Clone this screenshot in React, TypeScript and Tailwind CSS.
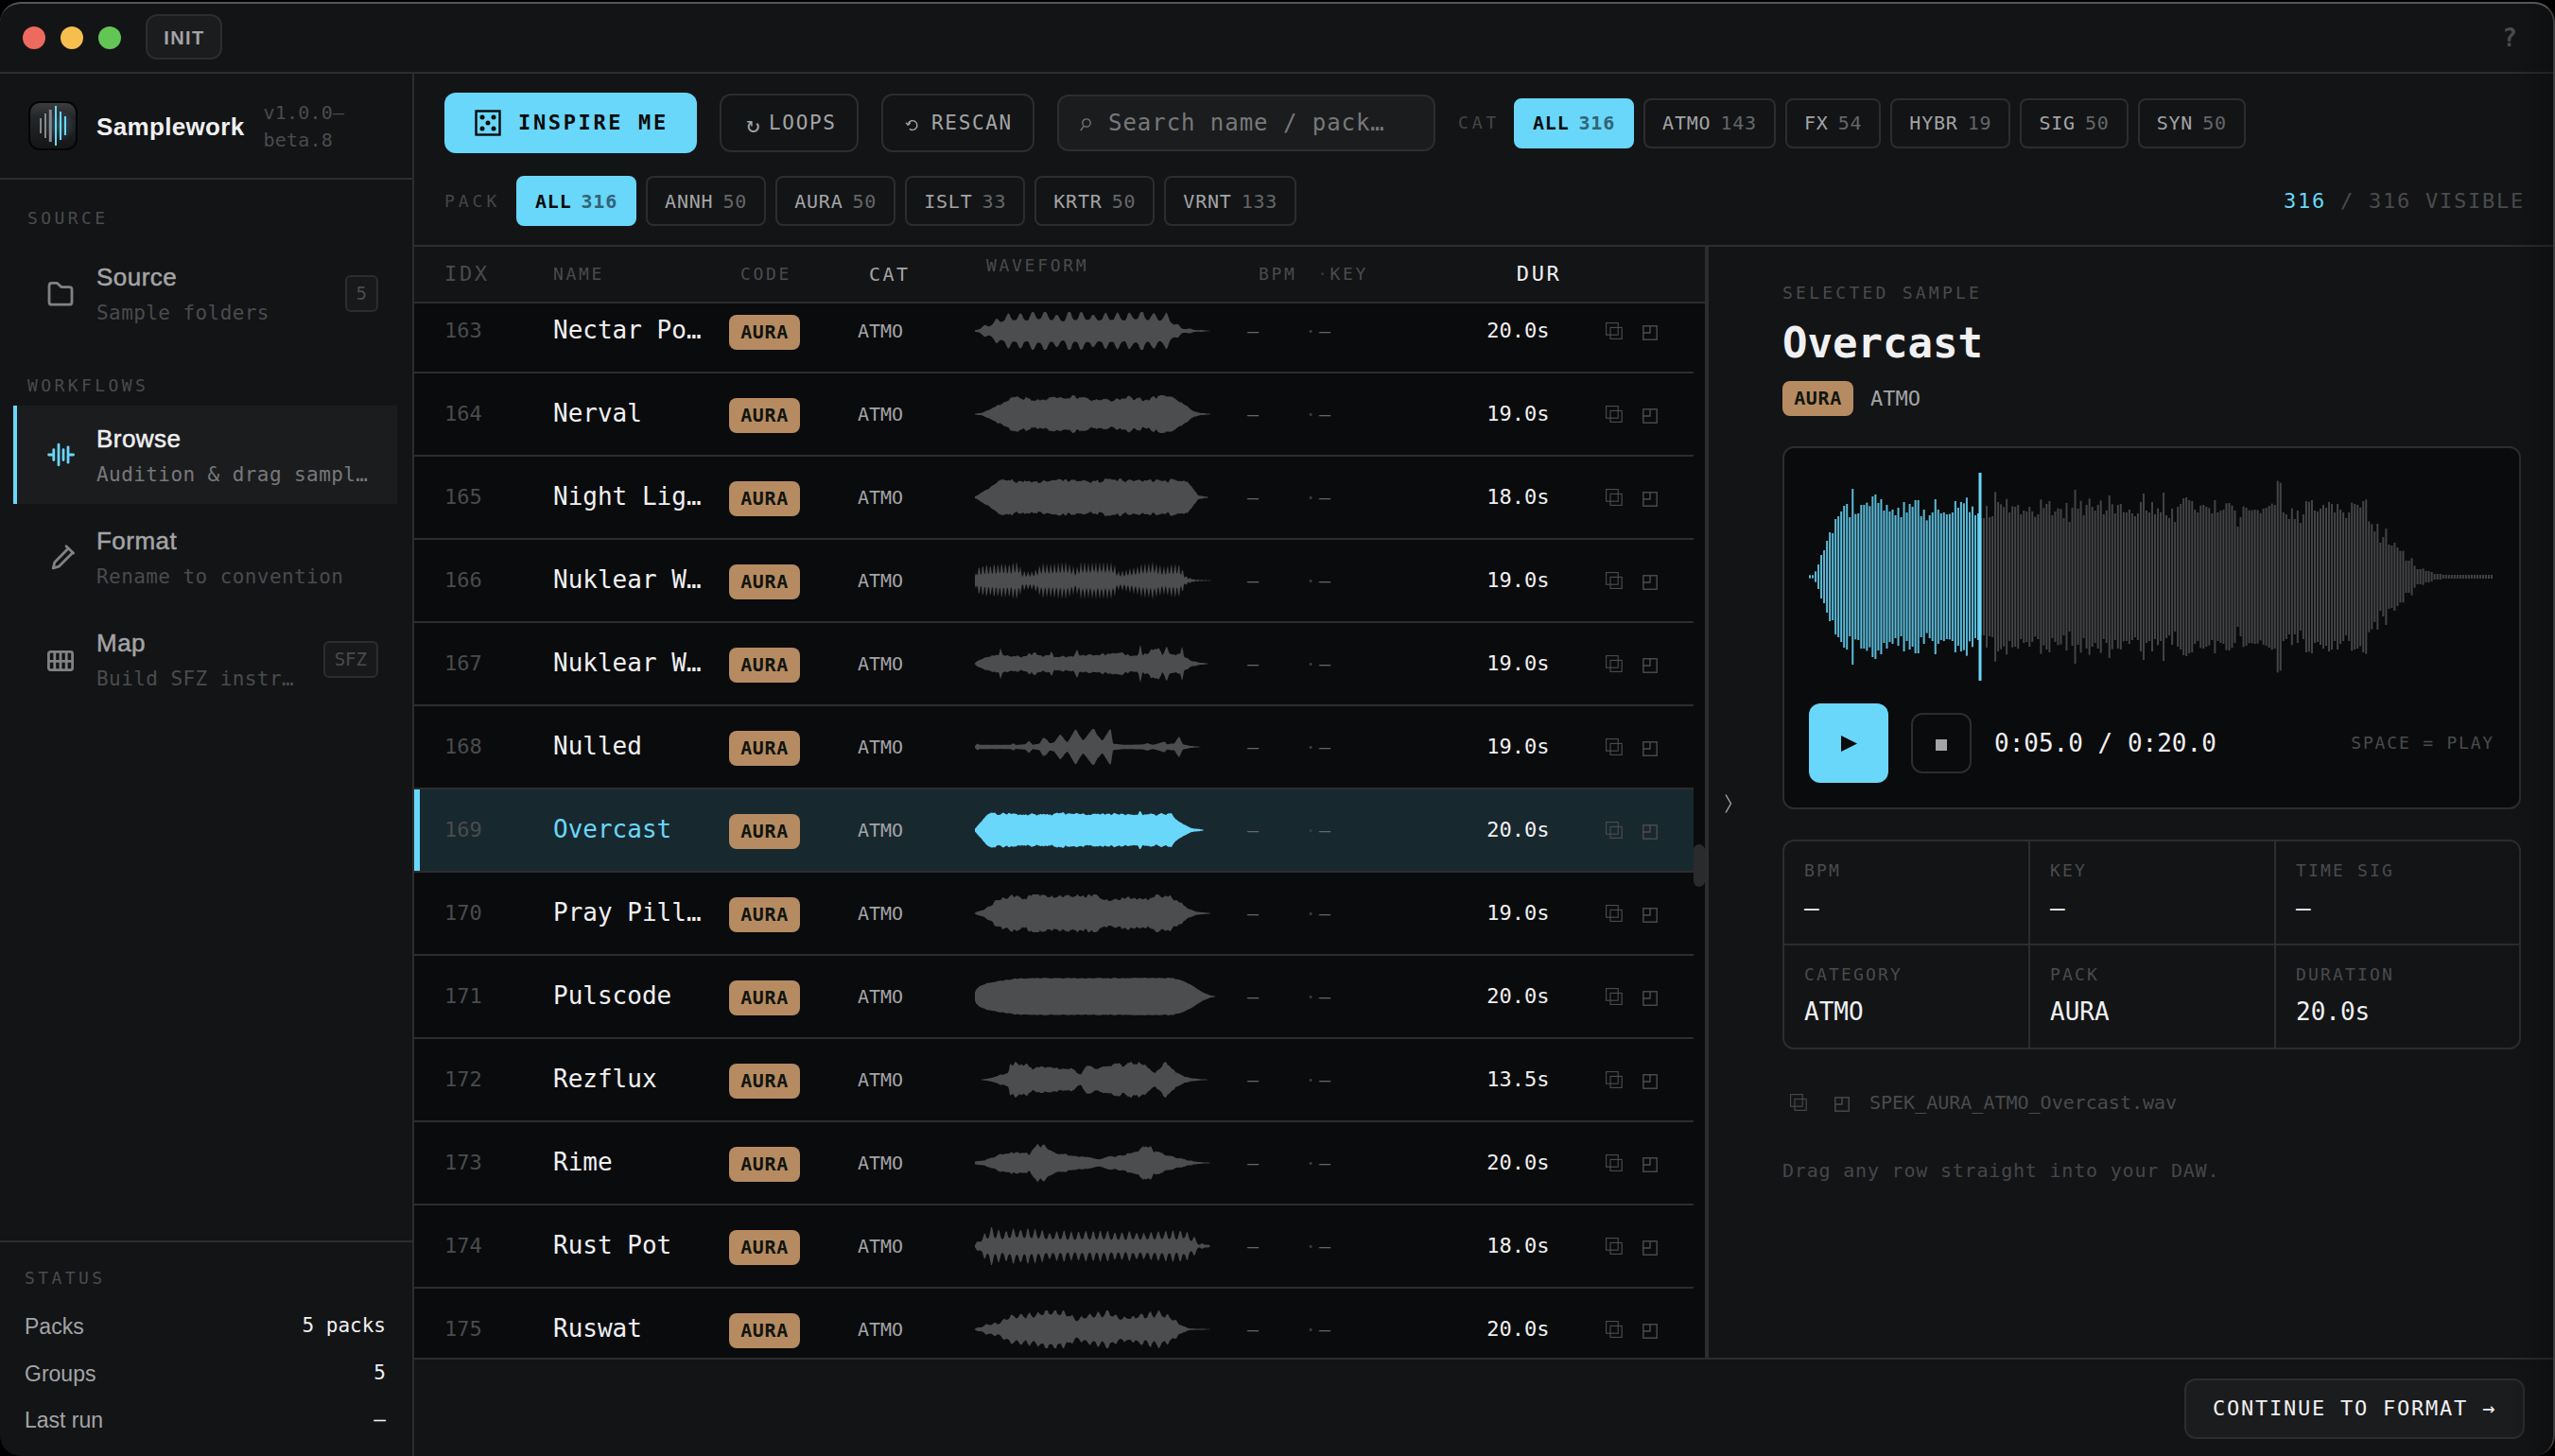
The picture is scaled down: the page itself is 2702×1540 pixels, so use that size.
import { ReactNode } from "react";
import clsx from "clsx";

type Point = [number, number];

type Wave = {
  env: Point[];
  rough?: number;
  period?: number;
  depth?: number;
};

type Sample = {
  idx: number;
  name: string;
  dur: string;
  wave: Wave;
};

const samples: Sample[] = [
  {
    idx: 163,
    name: "Nectar Po…",
    dur: "20.0s",
    wave: {
      env: [[0, 0.05], [0.03, 0.25], [0.07, 0.55], [0.11, 0.9], [0.14, 1], [0.19, 1.05], [0.29, 1.2], [0.35, 0.95], [0.4, 1.15], [0.5, 1], [0.7, 1.12], [0.8, 1.05], [0.83, 0.55], [0.86, 0.22], [0.9, 0.12], [0.93, 0.06], [0.98, 0.02]],
      rough: 0.18,
      period: 0.0505,
      depth: 0.42,
    },
  },
  {
    idx: 164,
    name: "Nerval",
    dur: "19.0s",
    wave: {
      env: [[0, 0.02], [0.03, 0.08], [0.08, 0.42], [0.13, 0.75], [0.15, 1.05], [0.25, 0.88], [0.32, 0.95], [0.4, 1.1], [0.48, 0.9], [0.52, 0.88], [0.58, 0.85], [0.64, 1.08], [0.7, 0.9], [0.77, 1.12], [0.83, 0.98], [0.87, 0.6], [0.91, 0.2], [0.94, 0.06], [0.98, 0.02]],
      rough: 0.3,
    },
  },
  {
    idx: 165,
    name: "Night Lig…",
    dur: "18.0s",
    wave: {
      env: [[0, 0.05], [0.04, 0.38], [0.08, 0.75], [0.1, 1.05], [0.25, 0.95], [0.4, 1.05], [0.48, 0.95], [0.56, 1.1], [0.65, 1], [0.74, 0.98], [0.78, 1.05], [0.87, 1.05], [0.89, 0.85], [0.915, 0.4], [0.93, 0.1], [0.97, 0.03]],
      rough: 0.28,
    },
  },
  {
    idx: 166,
    name: "Nuklear W…",
    dur: "19.0s",
    wave: {
      env: [[0, 0.3], [0.01, 0.9], [0.1, 1.05], [0.15, 1.1], [0.18, 1.2], [0.195, 0.6], [0.24, 0.6], [0.28, 1], [0.38, 1.2], [0.42, 0.75], [0.44, 1.1], [0.5, 1.15], [0.57, 1.2], [0.6, 0.55], [0.66, 0.8], [0.74, 1.15], [0.78, 0.8], [0.85, 1.1], [0.88, 0.25], [0.92, 0.06], [0.98, 0.02]],
      rough: 0.2,
      period: 0.0157,
      depth: 0.62,
    },
  },
  {
    idx: 167,
    name: "Nuklear W…",
    dur: "19.0s",
    wave: {
      env: [[0, 0.05], [0.02, 0.25], [0.07, 0.5], [0.1, 0.5], [0.107, 0.9], [0.116, 0.48], [0.2, 0.48], [0.25, 0.72], [0.27, 0.48], [0.31, 0.5], [0.32, 0.7], [0.33, 0.45], [0.41, 0.5], [0.424, 0.95], [0.435, 0.5], [0.57, 0.65], [0.62, 0.7], [0.65, 0.45], [0.68, 0.5], [0.689, 1.25], [0.698, 0.55], [0.77, 1.1], [0.78, 0.6], [0.8, 1.2], [0.81, 0.6], [0.855, 0.6], [0.863, 1.25], [0.871, 0.45], [0.9, 0.18], [0.94, 0.06], [0.97, 0.02]],
      rough: 0.36,
    },
  },
  {
    idx: 168,
    name: "Nulled",
    dur: "19.0s",
    wave: {
      env: [[0, 0.05], [0.01, 0.2], [0.02, 0.12], [0.15, 0.12], [0.16, 0.22], [0.17, 0.12], [0.21, 0.15], [0.225, 0.35], [0.24, 0.12], [0.27, 0.2], [0.285, 0.55], [0.3, 0.42], [0.31, 0.2], [0.33, 0.25], [0.355, 0.72], [0.375, 0.38], [0.385, 0.25], [0.42, 1], [0.435, 0.65], [0.45, 0.35], [0.495, 1.08], [0.51, 0.65], [0.53, 0.35], [0.565, 1.05], [0.575, 0.18], [0.62, 0.12], [0.7, 0.14], [0.72, 0.2], [0.74, 0.12], [0.79, 0.3], [0.8, 0.15], [0.83, 0.2], [0.85, 0.6], [0.865, 0.15], [0.9, 0.05], [0.94, 0.01]],
      rough: 0.14,
    },
  },
  {
    idx: 169,
    name: "Overcast",
    dur: "20.0s",
    wave: {
      env: [[0, 0.08], [0.02, 0.42], [0.045, 0.8], [0.06, 0.98], [0.2, 0.9], [0.35, 0.96], [0.5, 0.94], [0.6, 0.94], [0.68, 0.88], [0.689, 1.2], [0.698, 0.9], [0.82, 0.95], [0.84, 0.6], [0.87, 0.36], [0.9, 0.12], [0.95, 0.03]],
      rough: 0.2,
    },
  },
  {
    idx: 170,
    name: "Pray Pill…",
    dur: "19.0s",
    wave: {
      env: [[0, 0.04], [0.04, 0.25], [0.1, 0.85], [0.17, 1.1], [0.2, 0.88], [0.25, 1.12], [0.4, 1.05], [0.52, 1.12], [0.56, 0.72], [0.64, 1.02], [0.7, 0.85], [0.75, 1.1], [0.82, 1.05], [0.86, 0.65], [0.89, 0.3], [0.92, 0.1], [0.98, 0.02]],
      rough: 0.32,
    },
  },
  {
    idx: 171,
    name: "Pulscode",
    dur: "20.0s",
    wave: {
      env: [[0, 0.2], [0.005, 0.4], [0.02, 0.56], [0.05, 0.72], [0.1, 0.85], [0.18, 0.99], [0.5, 1], [0.82, 1], [0.87, 0.85], [0.91, 0.55], [0.95, 0.22], [0.98, 0.06], [1, 0.02]],
      rough: 0.06,
    },
  },
  {
    idx: 172,
    name: "Rezflux",
    dur: "13.5s",
    wave: {
      env: [[0.025, 0.01], [0.06, 0.08], [0.1, 0.28], [0.14, 0.42], [0.146, 1], [0.16, 0.85], [0.17, 1.2], [0.185, 0.85], [0.22, 0.92], [0.24, 0.6], [0.28, 0.9], [0.32, 0.7], [0.4, 0.72], [0.44, 0.3], [0.47, 0.92], [0.5, 0.7], [0.56, 0.82], [0.68, 1.08], [0.72, 0.75], [0.75, 0.42], [0.79, 1.12], [0.82, 0.62], [0.86, 0.28], [0.9, 0.1], [0.94, 0.04], [0.97, 0.01]],
      rough: 0.3,
    },
  },
  {
    idx: 173,
    name: "Rime",
    dur: "20.0s",
    wave: {
      env: [[0, 0.08], [0.04, 0.16], [0.12, 0.6], [0.18, 0.68], [0.23, 0.6], [0.25, 1.1], [0.29, 1.2], [0.31, 0.85], [0.35, 0.6], [0.42, 0.45], [0.51, 0.24], [0.6, 0.48], [0.68, 0.7], [0.71, 1.2], [0.74, 0.88], [0.78, 0.62], [0.83, 0.36], [0.88, 0.18], [0.93, 0.06], [0.98, 0.02]],
      rough: 0.34,
    },
  },
  {
    idx: 174,
    name: "Rust Pot",
    dur: "18.0s",
    wave: {
      env: [[0, 0.1], [0.02, 0.5], [0.07, 1.2], [0.12, 0.95], [0.2, 1.1], [0.3, 0.9], [0.5, 0.9], [0.7, 0.88], [0.82, 0.9], [0.87, 1.02], [0.91, 0.6], [0.935, 0.15], [0.96, 0.18], [0.98, 0.03]],
      rough: 0.24,
      period: 0.0302,
      depth: 0.55,
    },
  },
  {
    idx: 175,
    name: "Ruswat",
    dur: "20.0s",
    wave: {
      env: [[0, 0.04], [0.05, 0.32], [0.1, 0.48], [0.15, 0.95], [0.25, 1.05], [0.33, 1.2], [0.39, 1.1], [0.42, 0.65], [0.48, 1.02], [0.56, 1.15], [0.61, 0.8], [0.7, 0.98], [0.78, 1.15], [0.83, 0.68], [0.87, 0.18], [0.9, 0.05], [0.98, 0.02]],
      rough: 0.26,
      period: 0.036,
      depth: 0.28,
    },
  },
];

// Top edge of every bar in the large waveform; the centre line is at 510.
const BAR_TOPS = [
  505, 505, 493, 471, 441, 426, 396, 369, 372, 327, 318, 303, 285, 279, 321, 231, 311, 309, 282, 282,
  275, 286, 255, 249, 276, 264, 300, 282, 303, 297, 315, 291, 321, 273, 306, 279, 288, 267, 267, 318,
  297, 331, 315, 306, 264, 297, 309, 306, 312, 311, 306, 270, 291, 273, 277, 259, 305, 287, 315, 309,
  324, 324, 285, 321, 318, 241, 273, 280, 289, 263, 306, 286, 288, 282, 312, 300, 303, 288, 303, 320,
  312, 265, 292, 279, 270, 315, 303, 293, 295, 324, 276, 336, 291, 234, 294, 269, 315, 282, 262, 288,
  300, 282, 268, 312, 300, 252, 280, 309, 282, 279, 305, 306, 297, 309, 318, 309, 273, 246, 300, 306,
  273, 312, 293, 306, 243, 315, 324, 294, 336, 288, 279, 261, 258, 267, 270, 297, 306, 284, 282, 288,
  292, 309, 267, 306, 300, 297, 277, 276, 284, 300, 351, 321, 287, 291, 299, 299, 297, 298, 308, 294,
  291, 285, 278, 282, 206, 212, 306, 312, 327, 293, 327, 300, 339, 312, 270, 272, 267, 300, 303, 294,
  282, 291, 273, 279, 306, 279, 297, 306, 324, 306, 275, 279, 282, 290, 270, 265, 334, 343, 366, 342,
  402, 384, 357, 408, 411, 402, 417, 428, 428, 459, 459, 451, 475, 486, 486, 484, 492, 492, 495, 501,
  501, 501, 504, 504, 504, 504, 504, 504, 504, 504, 504, 504, 504, 504, 504, 504, 504, 504, 504, 504,
];

const envelopeAt = (env: Point[], t: number) => {
  if (t < env[0][0] || t > env[env.length - 1][0]) return 0;
  for (let i = 1; i < env.length; i++) {
    const [x0, y0] = env[i - 1];
    const [x1, y1] = env[i];
    if (t <= x1) return y0 + ((y1 - y0) * (t - x0)) / (x1 - x0);
  }
  return 0;
};

const wavePath = ({ env, rough = 0.1, period, depth = 0 }: Wave, seed: number) => {
  let state = seed * 7919;
  const rand = () => {
    state = (state * 16807) % 2147483647;
    return state / 2147483647;
  };
  // coarse noise gives lumps a few pixels wide, fine noise roughens their edges
  const lumps = Array.from({ length: 90 }, rand);
  const top: string[] = [];
  const bottom: string[] = [];
  for (let x = 0; x <= 254; x += 1) {
    const t = x / 254;
    const cell = Math.floor(x / 3);
    const mix = (x % 3) / 3;
    const lump = lumps[cell] * (1 - mix) + lumps[cell + 1] * mix;
    let h = envelopeAt(env, t) * (1 - rough * (0.7 * lump + 0.3 * rand()));
    if (period) {
      const pulse = Math.pow((1 + Math.cos((2 * Math.PI * (t - 0.19)) / period)) / 2, 1.6);
      h *= 1 - depth + depth * pulse;
    }
    h = Math.min(h, 1);
    top.push(`${x} ${(20 - h * 20).toFixed(1)}`);
    bottom.unshift(`${x} ${(20 + h * 20).toFixed(1)}`);
  }
  return `M${top.join("L")}L${bottom.join("L")}Z`;
};

function MiniWave({ wave, seed, active }: { wave: Wave; seed: number; active: boolean }) {
  return (
    <svg width="256" height="40" viewBox="0 0 256 40" className={active ? "text-[#69d7f9]" : "text-[#4c4d4f]"}>
      <path d={wavePath(wave, seed)} fill="currentColor" />
    </svg>
  );
}

function CopyIcon() {
  return (
    <svg width="18" height="18" viewBox="0 0 18 18" fill="none" stroke="currentColor" strokeWidth="1.1">
      <rect x="0.6" y="0.6" width="12.6" height="12.6" />
      <rect x="5" y="5.4" width="12.2" height="12" />
    </svg>
  );
}

function RevealIcon() {
  return (
    <svg width="16" height="16" viewBox="0 0 16 16" fill="none" stroke="currentColor" strokeWidth="1.4">
      <rect x="0.8" y="0.8" width="14.4" height="14.4" />
      <path d="M8 1v7H1" />
    </svg>
  );
}

function Logo() {
  return (
    <svg width="52" height="52" viewBox="0 0 52 52">
      <defs>
        <linearGradient id="logoBg" x1="0" y1="0" x2="0" y2="1">
          <stop offset="0" stopColor="#3c3d3f" />
          <stop offset="0.3" stopColor="#252628" />
          <stop offset="1" stopColor="#141517" />
        </linearGradient>
        <radialGradient id="logoGlow">
          <stop offset="0" stopColor="#69d7f9" stopOpacity="0.25" />
          <stop offset="1" stopColor="#69d7f9" stopOpacity="0" />
        </radialGradient>
      </defs>
      <rect x="0" y="0" width="52" height="52" rx="12" fill="#050506" />
      <rect x="2" y="2" width="48" height="48" rx="10" fill="url(#logoBg)" />
      <circle cx="33" cy="26" r="17" fill="url(#logoGlow)" />
      <g stroke="#85888c" strokeWidth="2">
        <path d="M13 18v16M18 13v26" />
        <path d="M23.3 9v34" strokeWidth="3" />
      </g>
      <path d="M29 5v42M34 11v30M39 16v20" stroke="#69d7f9" strokeWidth="2" />
    </svg>
  );
}

function NavIcon({ children }: { children: ReactNode }) {
  return (
    <svg width="32" height="32" viewBox="0 0 16 16" fill="none" stroke="currentColor" strokeWidth="1.4" strokeLinecap="round" strokeLinejoin="round" className="shrink-0">
      {children}
    </svg>
  );
}

type NavItemProps = {
  icon: ReactNode;
  title: string;
  sub: string;
  badge?: string;
  active?: boolean;
};

function NavItem({ icon, title, sub, badge, active }: NavItemProps) {
  return (
    <div
      className={clsx(
        "ml-[14px] mr-4 flex h-[104px] items-center border-l-4 pl-[30px] pr-5",
        active ? "border-[#69d7f9] bg-[#1b1c1e]" : "border-transparent"
      )}
    >
      <div className={active ? "text-[#69d7f9]" : "text-[#818284]"}>{icon}</div>
      <div className="ml-[22px] mt-[3px] flex-1 whitespace-nowrap">
        <div
          className={clsx(
            "font-['Liberation_Sans',sans-serif] text-[26px] font-medium leading-[38px] tracking-[0.018em] [-webkit-text-stroke:0.5px_currentColor]",
            active ? "text-[#f0f0f2]" : "text-[#a3a4a6]"
          )}
        >
          {title}
        </div>
        <div className={clsx("text-[21px] leading-[38px] tracking-[0.02em]", active ? "text-[#77787a]" : "text-[#4a4b4d]")}>
          {sub}
        </div>
      </div>
      {badge && (
        <div className="flex h-[39px] items-center rounded-md border-2 border-[#2c2d2f] bg-[#18191b] px-[10px] text-[19px] leading-none text-[#4a4b4d]">
          {badge}
        </div>
      )}
    </div>
  );
}

function Chip({ label, count, active }: { label: string; count: number; active?: boolean }) {
  return (
    <div
      className={clsx(
        "flex h-[53px] items-center gap-[10px] rounded-lg border-2 px-[18px] text-[20px] leading-none tracking-[0.04em]",
        active ? "border-[#69d7f9] bg-[#69d7f9] font-bold text-[#0a0b0d]" : "border-[#2c2d2f] text-[#a3a4a6]"
      )}
    >
      <span>{label}</span>
      <span className={active ? "text-[#316476]" : "text-[#656668]"}>{count}</span>
    </div>
  );
}

function PackBadge() {
  return (
    <span className="flex h-[37px] w-[75px] items-center justify-center rounded-lg bg-[#b78b62] pb-[2px] text-[20px] font-bold leading-none tracking-[0.03em] text-[#11150f]">
      AURA
    </span>
  );
}

function SampleRow({ sample, active }: { sample: Sample; active: boolean }) {
  return (
    <div
      className={clsx(
        "flex h-[88px] shrink-0 items-center whitespace-nowrap border-b-2 border-[#2c2d2f] leading-none",
        active && "bg-[#18282f]"
      )}
    >
      <div className={clsx("h-full w-[6px]", active && "bg-[#69d7f9]")} />
      <div className="ml-[26px] w-[115px] text-[22px] text-[#4a4b4d]">{sample.idx}</div>
      <div className={clsx("w-[186px] -translate-y-px text-[26px]", active ? "text-[#69d7f9]" : "text-[#f0f0f2]")}>
        {sample.name}
      </div>
      <div className="w-[136px] pt-[3px]">
        <PackBadge />
      </div>
      <div className="w-[124px] text-[20px] text-[#a3a4a6]">ATMO</div>
      <div className="w-[288px]">
        <MiniWave wave={sample.wave} seed={sample.idx} active={active} />
      </div>
      <div className="w-[61px] text-[20px] text-[#656668]">—</div>
      <div className="flex w-[100px] text-[20px] text-[#656668]">
        <span className="w-[15px] text-[#3a3b3d]">·</span>
        <span>—</span>
      </div>
      <div className="w-[158.5px] text-right text-[22px] text-[#f0f0f2]">{sample.dur}</div>
      <div className="ml-[59px] flex items-center gap-[21px] text-[#4c4d4f]">
        <CopyIcon />
        <span className="pt-[4px]">
          <RevealIcon />
        </span>
      </div>
    </div>
  );
}

function InfoCell({ label, value, className }: { label: string; value: string; className?: string }) {
  return (
    <div className={clsx("flex flex-col border-[#2c2d2f] pl-[21px] pt-5", className)}>
      <span className="text-[18px] leading-[22px] tracking-[0.12em] text-[#4a4b4d]">{label}</span>
      <span className="mt-[13px] text-[26px] leading-[30px] text-[#f0f0f2]">{value}</span>
    </div>
  );
}

function Sidebar() {
  return (
    <aside className="flex w-[438px] shrink-0 flex-col border-r-2 border-[#2c2d2f]">
      <div className="flex h-[112px] shrink-0 items-center border-b-2 border-[#2c2d2f] pl-[30px]">
        <Logo />
        <span className="ml-5 mt-[2px] font-['Liberation_Sans',sans-serif] text-[26px] font-bold tracking-[0.013em] text-[#f0f0f2]">
          Samplework
        </span>
        <span className="ml-[20px] mt-[2px] text-[20px] leading-[29px] tracking-[0.01em] text-[#4a4b4d]">
          v1.0.0–
          <br />
          beta.8
        </span>
      </div>

      <nav className="flex-1">
        <div className="ml-[29px] mt-[31px] text-[18px] leading-5 tracking-[0.19em] text-[#4a4b4d]">SOURCE</div>
        <div className="mt-[17px]">
          <NavItem
            title="Source"
            sub="Sample folders"
            badge="5"
            icon={
              <NavIcon>
                <path d="M2 4.2c0-.9.5-1.5 1.4-1.5h2.3c.5 0 .8.2 1.1.5l1.6 1.6h4.2c.9 0 1.4.6 1.4 1.4v6.5c0 .9-.5 1.4-1.4 1.4H3.4c-.9 0-1.4-.5-1.4-1.4z" />
              </NavIcon>
            }
          />
        </div>
        <div className="ml-[29px] mt-[36px] text-[18px] leading-5 tracking-[0.19em] text-[#4a4b4d]">WORKFLOWS</div>
        <div className="mt-[11px] flex flex-col gap-1">
          <NavItem
            active
            title="Browse"
            sub="Audition & drag sampl…"
            icon={
              <NavIcon>
                <path d="M1.8 8h2.6M4.4 5.3v5.5M7 2.6v10.8M9.5 5.3v5.5M12 3.9v8.2M12 8h2.8" />
              </NavIcon>
            }
          />
          <NavItem
            title="Format"
            sub="Rename to convention"
            icon={
              <NavIcon>
                <path d="M11 2.4l3.8 3.6M12 3.6L4.9 10.9l-.8 3.1 3-.9L14.2 6" />
              </NavIcon>
            }
          />
          <NavItem
            title="Map"
            sub="Build SFZ instr…"
            badge="SFZ"
            icon={
              <NavIcon>
                <rect x="1.7" y="4.2" width="12.6" height="9.6" rx="1" />
                <path d="M1.7 9.2h12.6M4.9 4.2v9.6M8 4.2v9.6M11.1 4.2v9.6" />
              </NavIcon>
            }
          />
        </div>
      </nav>

      <div className="h-[228px] shrink-0 border-t-2 border-[#2c2d2f] pl-[26px] pr-7 pt-[28px]">
        <div className="text-[18px] leading-5 tracking-[0.19em] text-[#4a4b4d]">STATUS</div>
        <div className="mt-[16px] text-[21px] text-[#f0f0f2]">
          {[
            { label: "Packs", value: "5 packs" },
            { label: "Groups", value: "5" },
            { label: "Last run", value: "—" },
          ].map((item) => (
            <div key={item.label} className="flex h-[49.5px] items-center justify-between">
              <span className="pt-[2px] font-['Liberation_Sans',sans-serif] text-[23px] leading-none text-[#a3a4a6]">{item.label}</span>
              <span className="leading-none">{item.value}</span>
            </div>
          ))}
        </div>
      </div>
    </aside>
  );
}

function Toolbar() {
  return (
    <div className="h-[183px] shrink-0 border-b-2 border-[#2c2d2f] pl-8 pr-[30px] pt-5 leading-none">
      <div className="flex h-16 items-center">
        <button className="flex h-16 w-[267px] items-center rounded-xl bg-[#69d7f9] pl-8 text-[22px] font-bold tracking-[0.12em] text-[#0a0b0d]">
          <svg width="28" height="28" viewBox="0 0 28 28" className="mr-[18px]">
            <rect x="1.5" y="1.5" width="25" height="25" fill="none" stroke="currentColor" strokeWidth="2.4" />
            <g fill="currentColor">
              <circle cx="8" cy="8" r="2.5" />
              <circle cx="20" cy="8" r="2.5" />
              <circle cx="14" cy="14" r="2.5" />
              <circle cx="8" cy="20" r="2.5" />
              <circle cx="20" cy="20" r="2.5" />
            </g>
          </svg>
          INSPIRE ME
        </button>
        <button className="ml-6 flex h-[62px] w-[147px] items-center rounded-xl border-2 border-[#2c2d2f] pl-[18px] text-[21px] tracking-[0.08em] text-[#a3a4a6]">
          <span className="w-[32px] pt-[3px] text-[24px]">↻</span>
          LOOPS
        </button>
        <button className="ml-6 flex h-[62px] w-[162px] items-center rounded-xl border-2 border-[#2c2d2f] pl-[23px] text-[21px] tracking-[0.08em] text-[#a3a4a6]">
          <svg width="15" height="18" viewBox="0 0 15 18" fill="none" stroke="currentColor" strokeWidth="1.4" className="mr-[13px] mt-1">
            <path d="M3.4 7.8a4.9 4.9 0 1 1 1.5 5.6M1 6.6l2.2 2.6 2.6-2.2" />
          </svg>
          RESCAN
        </button>
        <div className="ml-6 flex h-[60px] w-[400px] items-center rounded-xl border-2 border-[#2c2d2f] bg-[#1b1c1e] pl-[22px] text-[24px] tracking-[0.04em] text-[#77787a]">
          <svg width="12" height="14" viewBox="0 0 12 14" fill="none" stroke="currentColor" strokeWidth="1.3" className="mr-[18px] mt-1">
            <circle cx="7" cy="5" r="4.2" />
            <path d="M4.2 8.4L0.8 13" />
          </svg>
          Search name / pack…
        </div>
        <span className="ml-[24px] w-[59px] text-[18px] tracking-[0.22em] text-[#454648]">CAT</span>
        <div className="flex gap-[10px]">
          <Chip label="ALL" count={316} active />
          <Chip label="ATMO" count={143} />
          <Chip label="FX" count={54} />
          <Chip label="HYBR" count={19} />
          <Chip label="SIG" count={50} />
          <Chip label="SYN" count={50} />
        </div>
      </div>

      <div className="mt-6 flex h-[53px] items-center">
        <span className="w-[76px] text-[18px] tracking-[0.22em] text-[#454648]">PACK</span>
        <div className="flex gap-[10px]">
          <Chip label="ALL" count={316} active />
          <Chip label="ANNH" count={50} />
          <Chip label="AURA" count={50} />
          <Chip label="ISLT" count={33} />
          <Chip label="KRTR" count={50} />
          <Chip label="VRNT" count={133} />
        </div>
        <div className="ml-auto text-[22px] tracking-[0.08em] text-[#4a4b4d]">
          <span className="text-[#69d7f9]">316</span> / 316 VISIBLE
        </div>
      </div>
    </div>
  );
}

function SampleTable() {
  return (
    <div className="flex w-[1365px] shrink-0 flex-col bg-[#0a0b0d]">
      <div className="flex h-[60px] shrink-0 items-center border-b-2 border-[#2c2d2f] bg-[#131416] pl-[32px] text-[18px] leading-none tracking-[0.15em] text-[#4a4b4d]">
        <span className="w-[115px] text-[22px] tracking-[0.12em]">IDX</span>
        <span className="w-[198px]">NAME</span>
        <span className="w-[136px]">CODE</span>
        <span className="w-[124px] text-[20px] tracking-[0.12em] text-[#a3a4a6]">CAT</span>
        <span className="w-[288px] pb-[18px]">WAVEFORM</span>
        <span className="w-[62px]">BPM</span>
        <span className="w-[99px]">
          <span className="text-[#3a3b3d]">·</span>KEY
        </span>
        <span className="w-[159.5px] text-right text-[22px] tracking-[0.12em] text-[#f0f0f2]">DUR</span>
      </div>
      <div className="flex min-h-0 flex-1">
        {/* list is scrolled a few pixels past the top of the first row */}
        <div className="flex w-[1353px] flex-col overflow-hidden">
          <div className="-mt-[14px] flex flex-col">
            {samples.map((sample) => (
              <SampleRow key={sample.idx} sample={sample} active={sample.idx === 169} />
            ))}
          </div>
        </div>
        <div className="w-3 pt-[572px]">
          <div className="h-[45px] rounded-full bg-[#2a2b2c]" />
        </div>
      </div>
    </div>
  );
}

function Player() {
  return (
    <div className="mt-8 h-[384px] rounded-xl border-2 border-[#2c2d2f] bg-[#0a0b0d] px-[26px] pt-[26px]">
      <svg width="724" height="220" viewBox="0 0 724 220">
        {BAR_TOPS.map((top, i) => {
          const half = (510 - top) / 3;
          return (
            <rect
              key={i}
              x={i * 3.0167}
              y={110 - half}
              width="2"
              height={half * 2}
              fill={i < 60 ? "#5bbad8" : "#434446"}
            />
          );
        })}
        <rect x="179.5" y="0" width="3" height="220" fill="#69d7f9" />
      </svg>
      <div className="mt-6 flex items-center leading-none">
        <button className="flex size-[84px] items-center justify-center rounded-xl bg-[#69d7f9]">
          <svg width="17" height="17" viewBox="0 0 17 17" fill="#0a0b0d">
            <path d="M0 0l17 8.5L0 17z" />
          </svg>
        </button>
        <button className="ml-6 flex size-16 items-center justify-center rounded-xl border-2 border-[#2c2d2f]">
          <span className="mt-1 size-3 bg-[#a3a4a6]" />
        </button>
        <span className="ml-6 text-[26px] text-[#f0f0f2]">0:05.0 / 0:20.0</span>
        <span className="ml-auto text-[18px] tracking-[0.1em] text-[#4a4b4d]">SPACE = PLAY</span>
      </div>
    </div>
  );
}

function Inspector() {
  return (
    <div className="flex min-w-0 flex-1 border-l-4 border-[#2c2d2f]">
      <div className="flex w-[78px] shrink-0 items-center justify-center pr-[36px] pt-[3px]">
        <svg width="8" height="20" viewBox="0 0 8 20" fill="none" stroke="#a3a4a6" strokeWidth="1.4">
          <path d="M1 0.5l5.5 9.5L1 19.5" />
        </svg>
      </div>
      <div className="w-[781px] shrink-0 leading-none">
        <div className="mt-[38px] text-[18px] leading-[22px] tracking-[0.18em] text-[#4a4b4d]">SELECTED SAMPLE</div>
        <div className="mt-[17px] text-[44px] font-bold leading-[50px] text-[#f0f0f2]">Overcast</div>
        <div className="mt-[15px] flex items-center">
          <PackBadge />
          <span className="ml-[18px] text-[22px] text-[#a3a4a6]">ATMO</span>
        </div>

        <Player />

        <div className="mt-8 grid h-[222px] grid-cols-[260px_260px_1fr] grid-rows-[110px_1fr] rounded-xl border-2 border-[#2c2d2f]">
          <InfoCell label="BPM" value="—" className="border-b-2 border-r-2" />
          <InfoCell label="KEY" value="—" className="border-b-2 border-r-2" />
          <InfoCell label="TIME SIG" value="—" className="border-b-2" />
          <InfoCell label="CATEGORY" value="ATMO" className="border-r-2" />
          <InfoCell label="PACK" value="AURA" className="border-r-2" />
          <InfoCell label="DURATION" value="20.0s" />
        </div>

        <div className="mt-[46px] flex h-5 items-center pl-2 text-[20px] text-[#4a4b4d]">
          <CopyIcon />
          <span className="ml-[29px] pt-[4px]">
            <RevealIcon />
          </span>
          <span className="ml-[21px]">SPEK_AURA_ATMO_Overcast.wav</span>
        </div>
        <div className="mt-[52px] text-[20px] tracking-[0.04em] text-[#464749]">Drag any row straight into your DAW.</div>
      </div>
    </div>
  );
}

export default function App() {
  return (
    <div className="h-[1540px] w-[2702px] overflow-hidden bg-black pt-[2px] font-['DejaVu_Sans_Mono',monospace]">
      <div className="relative flex h-[1538px] flex-col overflow-hidden rounded-[22px] border-r-2 border-t-2 border-r-[#3c3d3e] border-t-[#555658] bg-[#131416]">
        <header className="flex h-[74px] shrink-0 items-center border-b-2 border-[#2c2d2f] pl-6 pr-[38px] leading-none">
          <div className="flex gap-4">
            <span className="size-6 rounded-full bg-[#ed6a5f]" />
            <span className="size-6 rounded-full bg-[#f5be4f]" />
            <span className="size-6 rounded-full bg-[#62c554]" />
          </div>
          <div className="-mt-[2px] ml-[26px] flex h-12 w-[81px] items-center justify-center rounded-xl border-2 border-[#2c2d2f] bg-[#1b1c1e] pl-px pt-px font-['Liberation_Sans',sans-serif] text-[20px] font-bold tracking-[0.07em] text-[#a3a4a6]">
            INIT
          </div>
          <span className="ml-auto text-[26px] font-bold text-[#4a4b4d]">?</span>
        </header>

        <div className="flex min-h-0 flex-1">
          <Sidebar />
          <main className="flex min-w-0 flex-1 flex-col">
            <Toolbar />
            <div className="flex min-h-0 flex-1">
              <SampleTable />
              <Inspector />
            </div>
            <footer className="flex h-[104px] shrink-0 items-center justify-end border-t-2 border-[#2c2d2f] pr-[30px] pt-[2px]">
              <button className="flex h-16 w-[360px] items-center rounded-xl border-2 border-[#2c2d2f] bg-[#1b1c1e] pl-7 text-[22px] leading-none tracking-[0.08em] text-[#f0f0f2]">
                CONTINUE TO FORMAT →
              </button>
            </footer>
          </main>
        </div>

        {/* darker falloff along the right window edge */}
        <div className="pointer-events-none absolute inset-y-0 right-0 w-12 bg-linear-to-r from-transparent to-black/25" />
      </div>
    </div>
  );
}
